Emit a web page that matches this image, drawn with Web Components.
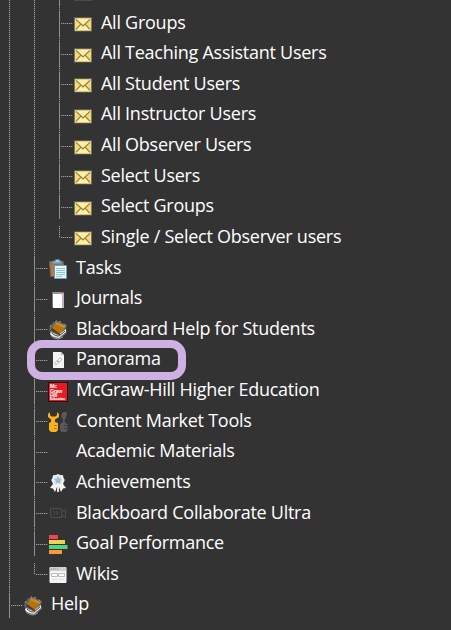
<!DOCTYPE html>
<html lang="en">
<head>
<meta charset="utf-8">
<title>Course menu</title>
<style>
  body { margin: 0; background: #333; }
</style>
</head>
<body>
<tree-menu>
  <tree-group>
    <tree-group>
      <tree-item icon="mail"></tree-item>
      <tree-item icon="mail">All Groups</tree-item>
      <tree-item icon="mail">All Teaching Assistant Users</tree-item>
      <tree-item icon="mail">All Student Users</tree-item>
      <tree-item icon="mail">All Instructor Users</tree-item>
      <tree-item icon="mail">All Observer Users</tree-item>
      <tree-item icon="mail">Select Users</tree-item>
      <tree-item icon="mail">Select Groups</tree-item>
      <tree-item icon="mail" last>Single / Select Observer users</tree-item>
    </tree-group>
    <tree-item icon="tasks">Tasks</tree-item>
    <tree-item icon="journal">Journals</tree-item>
    <tree-item icon="book">Blackboard Help for Students</tree-item>
    <tree-item icon="link" marked>Panorama</tree-item>
    <tree-item icon="mcgraw">McGraw-Hill Higher Education</tree-item>
    <tree-item icon="tools">Content Market Tools</tree-item>
    <tree-item>Academic Materials</tree-item>
    <tree-item icon="award">Achievements</tree-item>
    <tree-item icon="video">Blackboard Collaborate Ultra</tree-item>
    <tree-item icon="bars">Goal Performance</tree-item>
    <tree-item icon="wiki" last>Wikis</tree-item>
  </tree-group>
  <tree-item icon="book">Help</tree-item>
</tree-menu>

<script>
const icons = {
  mail: `
    <rect x="1" y="3.400" width="18" height="14" fill="#777568"/>
    <rect x="2" y="4.400" width="16" height="12" fill="#f5da78"/>
    <path d="M2 4.400h16l-8 7z" fill="#fdeea6"/>
    <path d="M2 16.400l6-6 2 2 2-2 6 6z" fill="#fff0a4"/>
    <path d="M3 5.400l7 6.500 7-6.500M3 15.400l4.700-5M17 15.400l-4.700-5" fill="none" stroke="#8b7d46" stroke-width="1.200"/>`,
  tasks: `
    <path d="M1.500 2.500h14v15h-13z" fill="#a87c50" stroke="#77593e"/>
    <path d="M4 5V2.500l3-1L8 .3h3L12 1.500l2 1V5z" fill="#7da9c7" stroke="#506c7e" stroke-width=".7"/>
    <path d="M8 2h3" stroke="#d7edf8"/>
    <path d="M6.500 6.500h12v13h-12z" fill="#e8f5fc" stroke="#7998ab"/>
    <path d="M8 9.500h9M8 11.500h9M8 13.500h9M8 15.500h9M8 17.500h6" stroke="#8cc4e6" stroke-width="1"/>`,
  journal: `
    <rect x="4" y="2" width="12" height="15" fill="#777"/>
    <path d="M5 4h9v14H5z" fill="#fff"/>
    <path d="M14 3h2v15h-2z" fill="#c8aeb9"/>
    <path d="M5 3h9" stroke="#b5b5b5"/>`,
  book: `
    <path d="M1 9l2-4 4-3 3-1 9 4-1 4 1 4-7 6H9l-6-4z" fill="#5c6469"/>
    <path d="M3 12c-2 2 0 4 3 5l5 1 7-6v-3l-8 6z" fill="#e8e8e8"/>
    <path d="M4 13c2 2 4 3 7 3l6-5" fill="none" stroke="#4b4540"/>
    <path d="M4 8l4-6 10 4-6 8z" fill="#b57410"/>
    <path d="M7 4l1.500-2L18 6l-2 2z" fill="#c88a2c"/>
    <path d="M4 8l8 6v1.500L3 10z" fill="#573814"/>
    <path d="M2 7l1-2M4.500 3.500l1-1M7 2l2-1.500M11 2l2-.5M16 4l1 .5M3 16l3 2 4 1 5-2" fill="none" stroke="#8d9ba5"/>`,
  link: `
    <path d="M5 1h8l3 3v13H5z" fill="#f5f5f5"/>
    <path d="M13 1v3h3" fill="#ccc" stroke="#aaa" stroke-width=".5"/>
    <g fill="none" stroke="#a8a8a8" stroke-width=".8">
      <rect x="6.300" y="10.500" width="5" height="2.600" rx="1.300" transform="rotate(-45 8.800 11.800)"/>
      <rect x="9" y="7.800" width="5" height="2.600" rx="1.300" transform="rotate(-45 11.500 9.100)"/>
    </g>`,
  mcgraw: `
    <rect width="20" height="20" rx="1" fill="#210b0d"/>
    <rect x="1" y="1" width="18" height="18" fill="#e81b24"/>
    <g fill="#fff" font-family="Liberation Sans, sans-serif" font-weight="700" font-size="5.300">
      <text x="2" y="6">Mc</text><text x="2" y="10.500" textLength="12">Graw</text><text x="2" y="15">Hill</text>
      <text x="2" y="18" font-size="3" textLength="15" lengthAdjust="spacingAndGlyphs">Education</text>
    </g>`,
  tools: `
    <path d="M2 0L0 2v3l3 2.500V10l-2 1v7l2 2h5l2-2v-7L7 10V7.500L11 5V2L9 0v3L7.500 4.500h-4L2 3z" fill="#fbb117"/>
    <path d="M6 13.500h3M6 16.500h3" stroke="#b87500"/>
    <path d="M15 0h3l1 2-1 4-1.200 1v3.500L19.500 12v7l-2 1h-4l-1.500-2v-6l3-2V7L13.500 5.500V2z" fill="#595959"/>
    <path d="M16 13.500h3M16 16.500h3" stroke="#3c3c3c"/>`,
  award: `
    <path d="M5 11l-3 4 3 .5L7 19l2-5h2l2 5 2-3.500 3-.5-3-4z" fill="#f4f4f4"/>
    <path d="M10 1l2 1 3 .3.500 2.700 1.300 2-1.300 2.500-.5 2.500-3 .5-2 1.500-2-1.500-3-.5-.5-2.500L3.200 7l1.300-2L5 2.300 8 2z" fill="#f2f2f2"/>
    <circle cx="10" cy="7" r="4.300" fill="#dde3e7"/>
    <path d="M10 3l1.200 2.600 2.800.4-2 2 .5 2.900L10 9.500l-2.500 1.400.5-2.900-2-2 2.800-.4z" fill="#9abfdd"/>
    <path d="M9 14h2v5H9z" fill="#e5e5e5"/>`,
  video: `
    <g fill="none" stroke="#4d4d4d" stroke-width="1">
      <path d="M2.500 4.500h11v3l4-2v8l-4-2v2h-11zM13.500 7v5M5 7l2 2-2 2M8 7l2 2-2 2"/>
    </g>`,
  bars: `
    <rect x="1" y="0" width="9" height="4" fill="#f4454c"/>
    <rect x="1" y="5" width="16" height="4" fill="#f5cf52"/>
    <rect x="1" y="10" width="18.500" height="4" fill="#4fd683"/>
    <rect x="1" y="15" width="13" height="4" fill="#ff963e"/>`,
  wiki: `
    <rect x="1.500" y="2" width="17" height="16" rx="1" fill="#f5f5f5"/>
    <path d="M2 2h16v4H2z" fill="#d0d0d0"/>
    <path d="M3 4h7" stroke="#888" stroke-dasharray="1 1"/>
    <path d="M3.500 8.500h6v3h-6zM10.500 8.500h6v3h-6z" fill="#fff" stroke="#bbb"/>
    <path d="M4 14.500h5M11 14.500h5" stroke="#ddd"/>`
};

class TreeMenu extends HTMLElement {
  constructor() {
    super();
    this.attachShadow({ mode: 'open' }).innerHTML = `
      <style>
        :host {
          --row: 30.625px;
          --dots: repeating-linear-gradient(#999 0 1px, #505050 1px 2px);
          display: flow-root; height: 630px; overflow: hidden;
          background: #333; color: #fff;
          font: 18px/30px "Open Sans", sans-serif;
          letter-spacing: -0.26px;
        }
        nav { margin: -25.59375px 0 0 9px; }
      </style>
      <nav aria-label="Course tools"><slot></slot></nav>
    `;
  }
}

class TreeGroup extends HTMLElement {
  constructor() {
    super();
    this.attachShadow({ mode: 'open' }).innerHTML = `
      <style>
        :host {
          display: block; padding-left: 25px;
          background: var(--dots) 0 0 / 1px 100% no-repeat;
        }
      </style>
      <slot></slot>
    `;
  }
}

class TreeItem extends HTMLElement {
  constructor() {
    super();
    this.attachShadow({ mode: 'open' }).innerHTML = `
      <style>
        :host {
          display: grid; grid-template-columns: 14px 20px auto;
          justify-content: start; position: relative;
          height: var(--row); white-space: nowrap;
          background:
            linear-gradient(#909090, #909090) 0 7px / 1px 23px no-repeat,
            var(--dots) 0 0 / 1px 100% no-repeat;
        }
        :host([last]) { background: var(--dots) 0 7px / 1px 12px no-repeat; }
        .branch {
          height: 1px; margin: 18px 0 0 2px;
          background: repeating-linear-gradient(90deg, #999 0 1px, #505050 1px 2px);
        }
        svg { display: block; width: 20px; height: 20px; margin-top: 9px; }
        .label { margin: 1.5px 0 0 8px; }
        .ring { display: none; }
        :host([marked]) .ring {
          display: block; position: absolute; left: -7px; top: -2px;
          width: 159px; height: 40px; box-sizing: border-box;
          border: 8px solid #ceb0e2; border-radius: 15px; z-index: 1;
        }
      </style>
      <span class="branch"></span>
      <svg viewBox="0 0 20 20" aria-hidden="true">${icons[this.getAttribute('icon')] || ''}</svg>
      <span class="label"><slot></slot></span>
      <span class="ring"></span>
    `;
  }
}

customElements.define('tree-menu', TreeMenu);
customElements.define('tree-group', TreeGroup);
customElements.define('tree-item', TreeItem);
</script>
</body>
</html>
